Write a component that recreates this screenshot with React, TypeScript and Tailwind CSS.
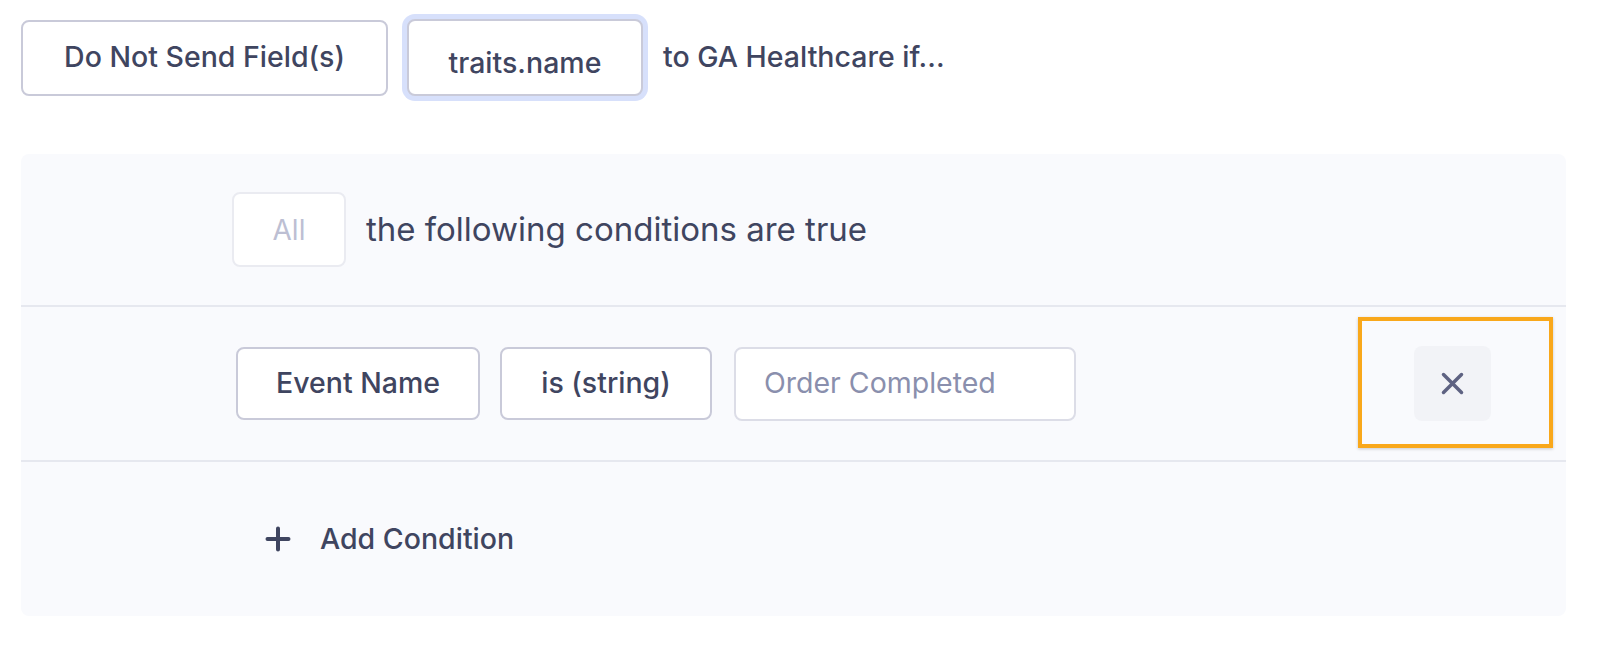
import React from "react";

const font = { fontFamily: "Inter, 'Noto Sans', sans-serif" };

export default function App() {
  return (
    <div className="w-[1600px] h-[663px] bg-white text-[#3f4560] relative" style={font}>
      <div className="pl-[21px] pt-[19px] pr-[34px]">
        <div className="flex items-center">
          <div className="w-[367px] h-[76px] rounded-[8px] border-2 border-[#c9cad9] bg-white flex items-center justify-center text-[28.5px] font-medium">
            Do Not Send Field(s)
          </div>
          <div className="ml-[19px] w-[236px] h-[77px] rounded-[8px] border-2 border-[#c9cad9] bg-white ring-[5px] ring-[#d7e0fb] flex items-center justify-center pt-[12px] text-[28.5px] font-medium">
            traits.name
          </div>
          <div className="ml-[20px] text-[28.5px] font-medium">to GA Healthcare if...</div>
        </div>

        <div className="mt-[58px] h-[462px] rounded-[8px] bg-[#f9fafd] flex flex-col">
          <div className="h-[153px] flex items-center pl-[211px] border-b-2 border-[#e6e8ef]">
            <div className="w-[114px] h-[75px] rounded-[8px] border-2 border-[#eaebf1] bg-white flex items-center justify-center text-[28px] text-[#bdbfd3]">
              All
            </div>
            <div className="ml-[20px] text-[33px]">the following conditions are true</div>
          </div>

          <div className="h-[155px] flex items-center pl-[215px] pr-[75px] border-b-2 border-[#e6e8ef]">
            <div className="w-[244px] h-[73px] rounded-[8px] border-2 border-[#c9cad9] bg-white flex items-center justify-center text-[28.5px] font-medium">
              Event Name
            </div>
            <div className="ml-[20px] w-[212px] h-[73px] rounded-[8px] border-2 border-[#c9cad9] bg-white flex items-center justify-center text-[28.5px] font-medium">
              is (string)
            </div>
            <div className="ml-[22px] w-[342px] h-[74px] rounded-[8px] border-2 border-[#dcdde7] bg-white flex items-center pl-[28px] text-[28.5px] text-[#8a8fad]">
              Order Completed
            </div>
            <div className="flex-1" />
            <div className="relative">
              <div className="w-[77px] h-[75px] rounded-[8px] bg-[#f2f3f7] flex items-center justify-center">
                <svg width="23" height="23" viewBox="0 0 23 23" fill="none" stroke="#5e6282" strokeWidth="3.5" strokeLinecap="round">
                  <path d="M2.5 2.5L20.5 20.5M20.5 2.5L2.5 20.5" />
                </svg>
              </div>
              <div className="absolute left-[-56px] top-[-29px] w-[195px] h-[131px] border-[4px] border-[#f9a81b] shadow-[0_1px_3px_rgba(0,0,0,0.2)]" />
            </div>
          </div>

          <div className="flex-1 flex items-center pl-[244px]">
            <svg width="26" height="26" viewBox="0 0 26 26" fill="none" stroke="#3f4560" strokeWidth="4" strokeLinecap="round">
              <path d="M13 2.5V23.5M2.5 13H23.5" />
            </svg>
            <div className="ml-[29px] text-[28.5px] font-medium">Add Condition</div>
          </div>
        </div>
      </div>
    </div>
  );
}
